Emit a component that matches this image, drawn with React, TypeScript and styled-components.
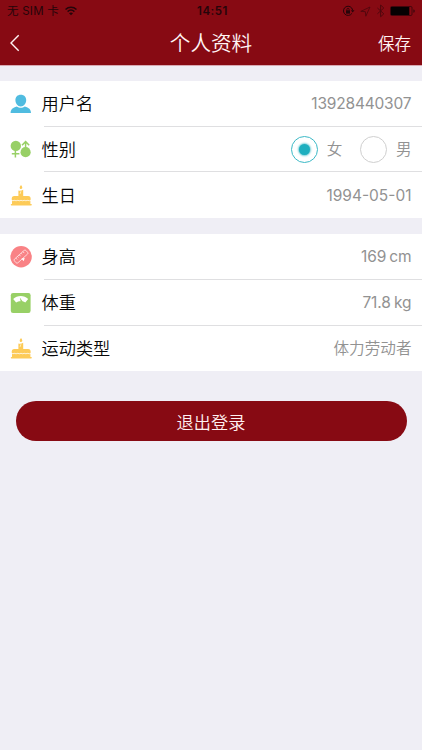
import React from 'react';
import styled, { createGlobalStyle } from 'styled-components';

const GlobalStyle = createGlobalStyle`
  * { box-sizing: border-box; }
  body {
    margin: 0;
    background: #efeef5;
    font-family: Inter, "Noto Sans CJK SC", sans-serif;
  }
`;

const Screen = styled.div`
  width: 100%;
  min-height: 750px;
  background: #efeef5;
`;

const Header = styled.header`
  height: 65px;
  background: #870a13;
  box-shadow: 0 1px 0 #d8a9b2;
`;

const StatusBar = styled.div`
  height: 22px;
  padding: 0 6px 0 7px;
  display: grid;
  grid-template-columns: 1fr auto 1fr;
  align-items: center;
  color: #25050a;
  font-size: 11.5px;
  line-height: 22px;
`;

const Carrier = styled.div`
  display: flex;
  align-items: center;
  gap: 6px;
  white-space: nowrap;
  letter-spacing: 0.25px;
`;

const Clock = styled.div`
  padding-left: 2px;
  font-size: 11.5px;
  font-weight: 600;
  letter-spacing: 0.5px;
`;

const Indicators = styled.div`
  display: flex;
  justify-content: flex-end;
  align-items: center;
`;

const NavBar = styled.div`
  height: 43px;
  padding: 0 11px;
  display: grid;
  grid-template-columns: 1fr auto 1fr;
  align-items: center;
  color: #fff4f4;
`;

const BackButton = styled.button`
  justify-self: start;
  display: flex;
  margin-left: -2px;
  padding: 0 0 1px;
  border: 0;
  background: none;
  color: inherit;
`;

const Title = styled.h1`
  margin: 0;
  font-size: 20.6px;
  font-weight: 350;
  line-height: 40px;
`;

const SaveButton = styled.button`
  justify-self: end;
  padding: 0;
  border: 0;
  background: none;
  color: inherit;
  font-family: inherit;
  font-size: 16.5px;
  font-weight: 350;
  line-height: 40px;
`;

const Section = styled.section`
  margin-top: 15.8px;
  background: #fff;
`;

const Row = styled.div`
  height: 45.8px;
  padding-left: 10px;
  display: flex;
`;

const IconSlot = styled.div`
  width: 31.5px;
  display: flex;
  align-items: center;
`;

const RowBody = styled.div`
  flex: 1;
  padding: 1px 10.5px 0 0;
  display: flex;
  align-items: center;
  justify-content: space-between;
`;

const Divider = styled.div`
  height: 1px;
  margin: -1px 0 0 44px;
  background: #dfdfe1;
`;

const Label = styled.span`
  color: #080808;
  font-size: 17.2px;
  font-weight: 350;
  line-height: 24px;
`;

const Value = styled.span<{ $spacing?: number; $wordGap?: number }>`
  color: #929292;
  font-size: 15.6px;
  font-weight: 350;
  line-height: 24px;
  letter-spacing: ${(p) => p.$spacing ?? 0}px;
  margin-right: ${(p) => -(p.$spacing ?? 0)}px;
  word-spacing: ${(p) => p.$wordGap ?? 0}px;
`;

const Measure = styled(Value)`
  font-size: 15.5px;
  font-weight: 400;
`;

const RadioGroup = styled.div`
  display: flex;
  gap: 17.5px;
`;

const RadioOption = styled.div`
  display: flex;
  align-items: center;
  gap: 9px;
`;

const RadioRing = styled.span<{ $checked: boolean }>`
  width: 27px;
  height: 27px;
  border: 1px solid ${(p) => (p.$checked ? '#3bb9c6' : '#cfcfcf')};
  border-radius: 50%;
  display: grid;
  place-items: center;
`;

const RadioDot = styled.span`
  width: 11px;
  height: 11px;
  border-radius: 50%;
  background: #1eafbf;
  box-shadow: 0 0 2px 0.8px #5cc6d1;
`;

const LogoutButton = styled.button`
  display: block;
  width: calc(100% - 31px);
  height: 40.5px;
  margin: 29.6px auto 0;
  padding: 0;
  border: 0;
  border-radius: 21px;
  background: #870a13;
  color: #fff0f1;
  font-family: inherit;
  font-size: 17.2px;
  font-weight: 350;
`;

const WifiIcon = () => (
  <svg width="12" height="10" viewBox="0 0 12 10" fill="none" stroke="#25050a" strokeWidth="1.5">
    <path d="M0.5 3.5C3.6 0.5 8.4 0.5 11.5 3.5" />
    <path d="M2.6 5.6C4.6 3.8 7.4 3.8 9.4 5.6" />
    <path d="M4 7.2C5.2 6.2 6.8 6.2 8 7.2L6 9.3Z" fill="#25050a" stroke="none" />
  </svg>
);

const StatusIcons = () => (
  <svg width="74" height="14" viewBox="0 0 74 14" fill="none">
    <g stroke="#25050a">
      <path d="M9.9 9.4A4.6 4.6 0 1 1 10.6 6" />
      <path d="M8.9 6.2h3.6l-1.8 2.3z" fill="#25050a" stroke="none" />
      <rect x="4" y="6.3" width="4" height="3.3" fill="#25050a" stroke="none" />
      <path d="M4.9 6.5V5.4a1.1 1.1 0 0 1 2.2 0v1.1" strokeWidth=".8" />
    </g>
    <path d="M18.8 7.4 28 3l-4.2 9.2-.5-4.6z" stroke="#50070d" strokeWidth=".9" />
    <path d="m35.4 4 6.4 5.8-3.2 3V1l3.2 3-6.4 5.8" stroke="#50070d" strokeWidth="1" />
    <rect x="48.5" y="2.5" width="21.5" height="9" rx="1.2" stroke="#42060c" />
    <rect x="49" y="3" width="18.3" height="8" fill="#050102" />
    <path d="M71.5 5.2c1.5.4 1.5 3.2 0 3.6z" fill="#25050a" />
  </svg>
);

const BackIcon = () => (
  <svg width="12" height="18" viewBox="0 0 12 18" fill="none">
    <path d="M9.7 1.2 2 9l7.7 7.8" stroke="#fff4f4" strokeWidth="1.4" />
  </svg>
);

const PersonIcon = () => (
  <svg width="22" height="22" viewBox="0 0 22 22" fill="#50bce0">
    <path d="M10.8 1.7c3.3 0 5.4 2.2 5.4 5.4 0 3.4-2.3 6.5-5.4 6.5S5.4 10.5 5.4 7.1c0-3.2 2.1-5.4 5.4-5.4z" />
    <path d="M.6 20c0-3.8 2.1-5.3 6.2-6.6 2.3 1.8 5.7 1.8 8 0 4.1 1.3 6.2 2.8 6.2 6.6z" />
  </svg>
);

const GenderIcon = () => (
  <svg width="22" height="22" viewBox="0 0 22 22">
    <g fill="#98d066" stroke="none">
      <circle cx="5.8" cy="7.9" r="5.2" />
      <circle cx="15.6" cy="14.2" r="5.1" />
    </g>
    <g fill="none" stroke="#98d066" strokeWidth="1.5">
      <path d="M5.4 12v7.4M1.8 15.8h7.6M15.6 10V4M12 7.2l3.6-3.6 3.6 3.6" />
    </g>
  </svg>
);

const CakeIcon = () => (
  <svg width="23" height="24" viewBox="0 0 23 24">
    <g fill="#fdcb58">
      <path d="M11 1.9c1.5 1.9 2 3.5 0 4.1-2-.3-1.5-2.4 0-4.1z" />
      <path d="M8.4 7.4c1.4.8 3.2.5 4.8-.7v6.6H8.4z" />
      <path d="M1.8 17c-.4-3 .4-4.1 2.6-4.1h13.6c2.2 0 3 1.1 2.6 4.1-1 .8-2 .7-3-.2-1.1 1-2.2 1-3.3 0-1.1 1-2.2 1-3.3 0-1.1 1-2.2 1-3.3 0-1.1 1-2.2 1-3.3 0-1 .7-1.9.8-2.6.2z" />
      <path d="M2 18c.9.3 1.7.2 2.4-.4 1.1.8 2.2.8 3.3 0 1.1.8 2.2.8 3.3 0 1.1.8 2.2.8 3.3 0 1.1.8 2.2.8 3.3 0 .9.6 1.9.7 2.8.4v3.6H2z" />
      <rect x=".8" y="20.9" width="21" height="1.5" rx=".7" />
    </g>
    <path d="m10.9 8.3-.8 2.6" stroke="#fff0bd" strokeWidth=".9" />
  </svg>
);

const HeightIcon = () => (
  <svg width="23" height="22" viewBox="0 0 23 22" fill="none">
    <circle cx="11.1" cy="10.8" r="10.7" fill="#f98285" />
    <g transform="rotate(-42 11.1 10.8)" stroke="#ffe5e5" strokeWidth=".8">
      <rect x="3.4" y="8.1" width="15.5" height="5" rx="1.2" />
      <path d="M6.3 8.1v2M8.7 8.1v1.5M11.1 8.1v2M13.5 8.1v1.5M15.9 8.1v2" />
    </g>
    <path d="m11.4 12.5 3.3-.5-1 3.3z" fill="#fff" />
  </svg>
);

const ScaleIcon = () => (
  <svg width="22" height="22" viewBox="0 0 22 22">
    <rect x=".8" y="1" width="19.8" height="20" rx="2.2" fill="#98d066" />
    <path d="M3.2 7.1c3.9-4.2 11.1-4.2 15 0l-2.9 3.4c-.8-.7-1.8-1-2.8-1.2L9.8 5.5l.8 3.8c-1.7 0-3.2.3-4.5 1.2z" fill="#fff" />
  </svg>
);

interface FieldProps {
  icon: React.ReactNode;
  label: string;
  last?: boolean;
  children: React.ReactNode;
}

const Field = ({ icon, label, last, children }: FieldProps) => (
  <>
    <Row>
      <IconSlot>{icon}</IconSlot>
      <RowBody>
        <Label>{label}</Label>
        {children}
      </RowBody>
    </Row>
    {!last && <Divider />}
  </>
);

export default function App() {
  return (
    <Screen>
      <GlobalStyle />
      <Header>
        <StatusBar>
          <Carrier><span>无 SIM 卡</span><WifiIcon /></Carrier>
          <Clock>14:51</Clock>
          <Indicators><StatusIcons /></Indicators>
        </StatusBar>
        <NavBar>
          <BackButton aria-label="返回"><BackIcon /></BackButton>
          <Title>个人资料</Title>
          <SaveButton>保存</SaveButton>
        </NavBar>
      </Header>
      <Section>
        <Field icon={<PersonIcon />} label="用户名"><Measure $spacing={-0.2}>13928440307</Measure></Field>
        <Field icon={<GenderIcon />} label="性别">
          <RadioGroup>
            <RadioOption><RadioRing $checked><RadioDot /></RadioRing><Value>女</Value></RadioOption>
            <RadioOption><RadioRing $checked={false} /><Value>男</Value></RadioOption>
          </RadioGroup>
        </Field>
        <Field icon={<CakeIcon />} label="生日" last><Measure>1994-05-01</Measure></Field>
      </Section>
      <Section>
        <Field icon={<HeightIcon />} label="身高"><Measure $spacing={-0.1} $wordGap={-1.4}>169 cm</Measure></Field>
        <Field icon={<ScaleIcon />} label="体重"><Measure $spacing={-0.15} $wordGap={-0.8}>71.8 kg</Measure></Field>
        <Field icon={<CakeIcon />} label="运动类型" last><Value>体力劳动者</Value></Field>
      </Section>
      <LogoutButton>退出登录</LogoutButton>
    </Screen>
  );
}
